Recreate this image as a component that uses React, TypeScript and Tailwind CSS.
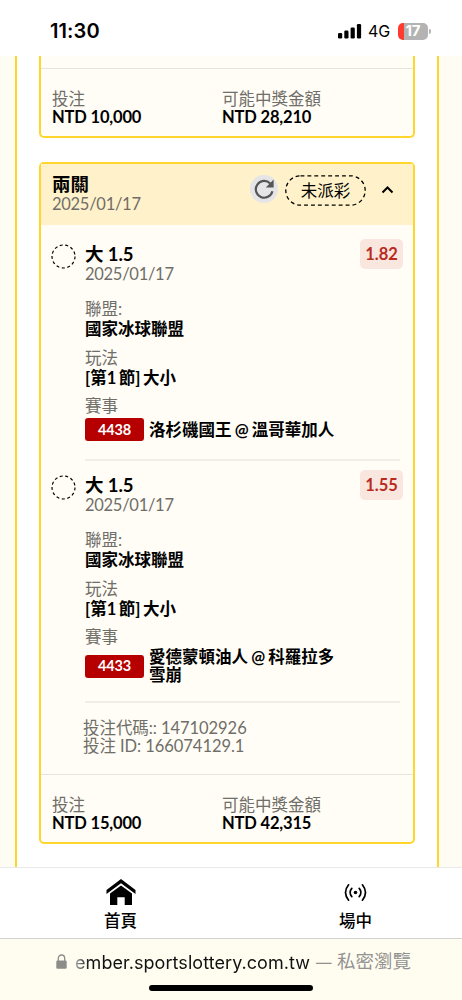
type Leg = {
  code: string;
  odds: string;
  match: string;
};

const legs: Leg[] = [
  { code: "4438", odds: "1.82", match: "洛杉磯國王 @ 溫哥華加人" },
  { code: "4433", odds: "1.55", match: "愛德蒙頓油人 @ 科羅拉多雪崩" },
];

function StatusBar() {
  return (
    <header className="flex h-14 shrink-0 items-center bg-white pt-1.5 pl-[50px] pr-[31px] font-['Inter','Noto_Sans_CJK_TC',sans-serif] text-black">
      <span className="text-[20px] font-semibold tracking-[0.1px]">11:30</span>
      <div className="ml-auto flex items-center">
        <svg width="24" height="16" viewBox="0 0 24 16" fill="black">
          <rect x="0" y="10" width="4.2" height="5.5" rx="1.2" />
          <rect x="6.3" y="7.5" width="4.2" height="8" rx="1.2" />
          <rect x="12.6" y="4.5" width="4.2" height="11" rx="1.2" />
          <rect x="18.9" y="1" width="4.2" height="14.5" rx="1.2" />
        </svg>
        <span className="ml-[6px] w-[23px] text-[16px] font-normal">4G</span>
        <div className="ml-[7px] flex items-center">
          <div className="flex h-[17px] w-[30px] items-center justify-center rounded-[5px] bg-[linear-gradient(90deg,#ff3b30_6px,#b3b3b3_6px)] text-[15px] leading-4 font-bold text-white">
            17
          </div>
          <div className="ml-px h-[5px] w-[2px] rounded-r-full bg-[#b3b3b3]" />
        </div>
      </div>
    </header>
  );
}

function Totals({ stake, payout }: { stake: string; payout: string }) {
  return (
    <div className="flex h-[68px] border-t border-[#e6e4dd] pt-[21px] pl-[11px] leading-[18px]">
      <div className="w-[170px]">
        <p className="text-[#6f6e69]">投注</p>
        <p className="font-bold tracking-[-0.16px]">{stake}</p>
      </div>
      <div>
        <p className="text-[#6f6e69]">可能中獎金額</p>
        <p className="font-bold tracking-[-0.16px]">{payout}</p>
      </div>
    </div>
  );
}

function LegItem({ leg }: { leg: Leg }) {
  return (
    <div className="flex pl-[10px]">
      <svg className="mt-[14px] shrink-0" width="25" height="25" viewBox="0 0 25 25">
        <circle cx="12.5" cy="12.5" r="11.5" fill="none" stroke="black" strokeWidth="1.2" strokeDasharray="3 2.56" />
      </svg>
      <div className="ml-[9px] flex w-[315px] flex-col border-b-2 border-[#efede6] pb-[17px]">
        <div className="flex h-[69px] justify-between pt-[14px]">
          <div>
            <p className="text-[18.5px] leading-5 font-bold tracking-[-0.1px]">大 1.5</p>
            <p className="pt-px leading-[18px] tracking-[-0.28px] text-[#6f6e69]">2025/01/17</p>
          </div>
          <span className="-mt-[5px] -mr-[3px] flex h-[30px] w-[43px] items-center justify-center rounded-[5px] bg-[#f8e6df] pt-px font-bold text-[#b82b1e]">
            {leg.odds}
          </span>
        </div>
        <p className="leading-5 text-[#6f6e69]">聯盟:</p>
        <p className="leading-5 font-bold">國家冰球聯盟</p>
        <p className="mt-[8.5px] leading-5 text-[#6f6e69]">玩法</p>
        <p className="leading-5 font-bold [word-spacing:-1.5px]">[第1 節] 大小</p>
        <p className="mt-[8.5px] leading-5 text-[#6f6e69]">賽事</p>
        <div className="mt-px flex min-h-[25px] items-center">
          <span className="flex h-[23px] w-[59px] shrink-0 items-center justify-center rounded-[3px] bg-[#b60000] text-[14.5px] font-bold tracking-[-0.1px] text-white">
            {leg.code}
          </span>
          <span className="ml-[5px] w-[192px] leading-[18px] font-bold break-all [word-spacing:-0.8px]">{leg.match}</span>
        </div>
      </div>
    </div>
  );
}

function BetCard() {
  return (
    <section className="mt-6 flex h-[682px] flex-col rounded-[5px] border-2 border-[#ffd62c] bg-[#fffdf5]">
      <div className="flex h-[61px] shrink-0 bg-[#fff1c9] pl-[11px]">
        <div className="w-[198px] pt-[10px]">
          <p className="text-[18.5px] leading-5 font-bold">兩關</p>
          <p className="pt-px leading-[18px] tracking-[-0.28px] text-[#6f6e69]">2025/01/17</p>
        </div>
        <div className="mt-[11px] flex size-7 items-center justify-center rounded-full bg-[#e5e5e7]">
          <svg width="20" height="20" viewBox="0 0 20 20" fill="none" stroke="#555557" strokeWidth="2.2">
            <path d="M16.2 4.4A8.4 8.4 0 1 0 18.4 12.3" />
            <path d="M19.6 0.6V8.4H11.8Z" fill="#555557" stroke="none" />
          </svg>
        </div>
        <div className="relative mt-[11px] ml-[7px] flex h-[31px] w-[81px] items-center justify-center">
          <svg className="absolute inset-0" width="81" height="31" viewBox="0 0 81 31">
            <rect x="0.8" y="0.8" width="79.4" height="29.4" rx="14.7" fill="none" stroke="black" strokeWidth="1.3" strokeDasharray="3.9 3.02" />
          </svg>
          <span className="pt-px">未派彩</span>
        </div>
        <svg className="mt-[21px] ml-[15px]" width="13" height="9" viewBox="0 0 13 9" fill="none" stroke="black" strokeWidth="2">
          <path d="M1.5 7.5L6.5 2.5L11.5 7.5" />
        </svg>
      </div>
      <div className="pt-[5px]">
        {legs.map((leg) => (
          <LegItem key={leg.code} leg={leg} />
        ))}
      </div>
      <div className="pt-4 pl-[42px] leading-[18px] tracking-[-0.06px] text-[#6f6e69]">
        <p>投注代碼:: 147102926</p>
        <p>投注 ID: 166074129.1</p>
      </div>
      <div className="mt-auto">
        <Totals stake="NTD 15,000" payout="NTD 42,315" />
      </div>
    </section>
  );
}

function BottomNav() {
  return (
    <nav className="flex h-[71px] shrink-0 border-t border-[#e9e9e9] bg-white pl-[3px]">
      <div className="flex w-[235px] shrink-0 flex-col items-center pt-[11px]">
        <svg width="30" height="27" viewBox="0 0 30 27" fill="black">
          <path d="M15 0L29.5 11V15L15 4.2L0.5 15V11Z" />
          <path d="M15 6.6L26 14.6V26H18.7V18.3H11.3V26H4V14.6Z" />
        </svg>
        <span className="mt-[5px] leading-5 font-medium">首頁</span>
      </div>
      <div className="flex w-[235px] shrink-0 flex-col items-center pt-[15px]">
        <svg width="23" height="19" viewBox="0 0 23 19" fill="none" stroke="black" strokeWidth="1.7" strokeLinecap="round">
          <circle cx="11.5" cy="9.5" r="1.8" fill="black" stroke="none" />
          <path d="M7.8 5.4Q4.3 9.5 7.8 13.6M15.2 5.4Q18.7 9.5 15.2 13.6" />
          <path d="M4.6 1.8Q-1.6 9.5 4.6 17.2M18.4 1.8Q24.6 9.5 18.4 17.2" />
        </svg>
        <span className="mt-[9px] leading-5 font-medium">場中</span>
      </div>
    </nav>
  );
}

function AddressBar() {
  return (
    <footer className="flex flex-1 flex-col border-t border-[#d2d2d0] bg-[#fffcf0] font-['Inter','Noto_Sans_CJK_TC',sans-serif]">
      <div className="flex h-[46px] items-center pl-14 whitespace-nowrap">
        <svg className="-mt-0.5" width="11" height="15" viewBox="0 0 11 15">
          <path d="M2.3 7V4.2a3.2 3.2 0 0 1 6.4 0V7" fill="none" stroke="#8c8c8a" strokeWidth="1.3" />
          <rect x="0.3" y="6.5" width="10.4" height="8.2" rx="1.3" fill="#8c8c8a" />
        </svg>
        <span className="ml-[8px] w-[235px] bg-[linear-gradient(90deg,#aaa_0,#111_14px)] bg-clip-text text-[18px] tracking-[0.06px] text-transparent">
          ember.sportslottery.com.tw
        </span>
        <span className="ml-[6px] text-[#929290]">
          <span className="inline-block w-[21px] text-[15.5px]">—</span>
          <span className="text-[18.5px]">私密瀏覽</span>
        </span>
      </div>
      <div className="mx-auto h-[6px] w-[164px] rounded-full bg-black" />
    </footer>
  );
}

export default function App() {
  return (
    <div className="flex h-[1000px] w-[462px] flex-col overflow-hidden bg-[#fffcf3] font-['Lato','Noto_Sans_CJK_TC',sans-serif] text-[16.5px] text-black">
      <StatusBar />
      <main className="mr-[23px] ml-[15px] h-[811px] shrink-0 border-x-2 border-[#ffd62c] bg-white px-[22px]">
        <section className="rounded-b-[5px] border-2 border-t-0 border-[#ffd62c] bg-[#fffdf5] pt-3">
          <Totals stake="NTD 10,000" payout="NTD 28,210" />
        </section>
        <BetCard />
      </main>
      <BottomNav />
      <AddressBar />
    </div>
  );
}
